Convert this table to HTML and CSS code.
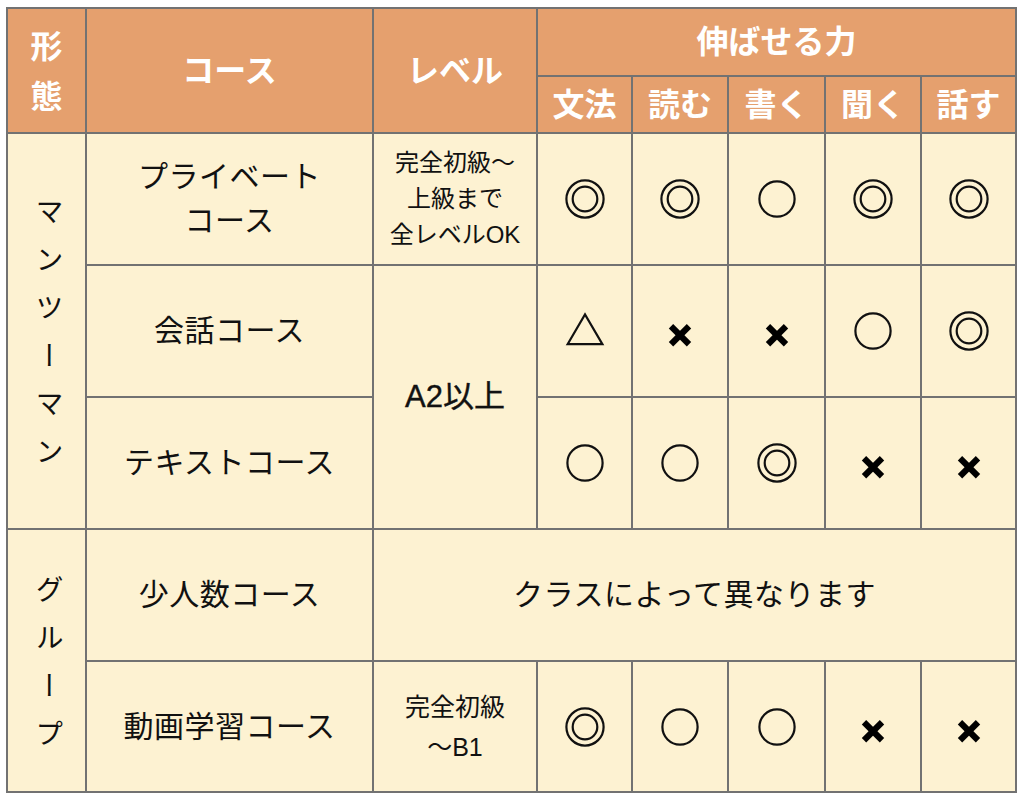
FILE: index.html
```html
<!DOCTYPE html>
<html lang="ja">
<head>
<meta charset="utf-8">
<title>コース比較</title>
<link rel="stylesheet" href="styles.css">
</head>
<body>
<svg class="defs" width="0" height="0" aria-hidden="true">
  <defs>
    <g id="dbl"><circle cx="20" cy="20" r="18.6" /><circle cx="20" cy="20" r="12.3" /></g>
    <g id="sgl"><circle cx="20" cy="20" r="17.6" /></g>
    <g id="tri"><polygon points="2.6,33.2 20,3.4 37.4,33.2" /></g>
    <g id="crs"><line x1="11" y1="15.2" x2="29" y2="33.2" /><line x1="29" y1="15.2" x2="11" y2="33.2" /></g>
  </defs>
</svg>
<div class="chart" role="table" aria-label="コース比較表">
  <div class="cell head span-r2 stacked">形<br>態</div>
  <div class="cell head span-r2">コース</div>
  <div class="cell head span-r2">レベル</div>
  <div class="cell head span-c5 big">伸ばせる力</div>
  <div class="cell head">文法</div>
  <div class="cell head">読む</div>
  <div class="cell head">書く</div>
  <div class="cell head">聞く</div>
  <div class="cell head">話す</div>

  <div class="cell side span-r3"><span class="vert">マンツーマン</span></div>
  <div class="cell name">プライベート<br>コース</div>
  <div class="cell level">完全初級〜<br>上級まで<br>全レベルOK</div>
  <div class="cell mark"><svg class="sym" viewBox="0 0 40 40" role="img" aria-label="◎"><use href="#dbl"/></svg></div>
  <div class="cell mark"><svg class="sym" viewBox="0 0 40 40" role="img" aria-label="◎"><use href="#dbl"/></svg></div>
  <div class="cell mark"><svg class="sym" viewBox="0 0 40 40" role="img" aria-label="○"><use href="#sgl"/></svg></div>
  <div class="cell mark"><svg class="sym" viewBox="0 0 40 40" role="img" aria-label="◎"><use href="#dbl"/></svg></div>
  <div class="cell mark"><svg class="sym" viewBox="0 0 40 40" role="img" aria-label="◎"><use href="#dbl"/></svg></div>

  <div class="cell name">会話コース</div>
  <div class="cell span-r2 a2">A2以上</div>
  <div class="cell mark"><svg class="sym" viewBox="0 0 40 40" role="img" aria-label="△"><use href="#tri"/></svg></div>
  <div class="cell mark"><svg class="sym x" viewBox="0 0 40 40" role="img" aria-label="×"><use href="#crs"/></svg></div>
  <div class="cell mark"><svg class="sym x" viewBox="0 0 40 40" role="img" aria-label="×"><use href="#crs"/></svg></div>
  <div class="cell mark"><svg class="sym" viewBox="0 0 40 40" role="img" aria-label="○"><use href="#sgl"/></svg></div>
  <div class="cell mark"><svg class="sym" viewBox="0 0 40 40" role="img" aria-label="◎"><use href="#dbl"/></svg></div>

  <div class="cell name">テキストコース</div>
  <div class="cell mark"><svg class="sym" viewBox="0 0 40 40" role="img" aria-label="○"><use href="#sgl"/></svg></div>
  <div class="cell mark"><svg class="sym" viewBox="0 0 40 40" role="img" aria-label="○"><use href="#sgl"/></svg></div>
  <div class="cell mark"><svg class="sym" viewBox="0 0 40 40" role="img" aria-label="◎"><use href="#dbl"/></svg></div>
  <div class="cell mark"><svg class="sym x" viewBox="0 0 40 40" role="img" aria-label="×"><use href="#crs"/></svg></div>
  <div class="cell mark"><svg class="sym x" viewBox="0 0 40 40" role="img" aria-label="×"><use href="#crs"/></svg></div>

  <div class="cell side span-r2"><span class="vert">グループ</span></div>
  <div class="cell name">少人数コース</div>
  <div class="cell span-c6 name">クラスによって異なります</div>

  <div class="cell name">動画学習コース</div>
  <div class="cell level lg">完全初級<br>〜B1</div>
  <div class="cell mark"><svg class="sym" viewBox="0 0 40 40" role="img" aria-label="◎"><use href="#dbl"/></svg></div>
  <div class="cell mark"><svg class="sym" viewBox="0 0 40 40" role="img" aria-label="○"><use href="#sgl"/></svg></div>
  <div class="cell mark"><svg class="sym" viewBox="0 0 40 40" role="img" aria-label="○"><use href="#sgl"/></svg></div>
  <div class="cell mark"><svg class="sym x" viewBox="0 0 40 40" role="img" aria-label="×"><use href="#crs"/></svg></div>
  <div class="cell mark"><svg class="sym x" viewBox="0 0 40 40" role="img" aria-label="×"><use href="#crs"/></svg></div>
</div>
</body>
</html>
```

FILE: styles.css
```css
html, body {
  margin: 0;
  padding: 0;
  background: #ffffff;
}

body {
  font-family: "Liberation Sans", "Noto Sans CJK JP", sans-serif;
  color: #111111;
}

.defs {
  position: absolute;
  width: 0;
  height: 0;
  overflow: hidden;
}

.chart {
  margin: 7px 0 0 6px;
  width: 1011px;
  box-sizing: border-box;
  padding: 2px;
  gap: 2px;
  background: #727272;
  display: grid;
  grid-template-columns: 77px 285px 162px 93px 94px 95px 94px 93px;
  grid-template-rows: 66px 55px 130px 130px 130px 130px 129px;
}

.cell {
  background: #fdf2d2;
  display: flex;
  align-items: center;
  justify-content: center;
  text-align: center;
  font-size: 30px;
  line-height: 44px;
}

.span-r2 { grid-row: span 2; }
.span-r3 { grid-row: span 3; }
.span-c5 { grid-column: span 5; }
.span-c6 { grid-column: span 6; }

.head {
  background: #e5a06e;
  color: #ffffff;
  font-weight: bold;
  font-size: 32px;
  line-height: 40px;
}

.head.stacked {
  line-height: 50px;
  padding-top: 2px;
}

.name {
  font-size: 30px;
  line-height: 44px;
  letter-spacing: 0.5px;
}

.level {
  font-size: 24px;
  line-height: 36px;
}

.level.lg {
  font-size: 25px;
  line-height: 40px;
}

.a2 {
  font-size: 31px;
  line-height: 40px;
  -webkit-text-stroke: 0.4px #111111;
}

.vert {
  writing-mode: vertical-rl;
  font-size: 28px;
  letter-spacing: 20px;
  line-height: 30px;
  margin-bottom: -20px;
}

.sym {
  width: 40px;
  height: 40px;
  fill: none;
  stroke: #111111;
  stroke-width: 2.2;
}

.sym.x {
  stroke-width: 6.2;
  stroke: #000000;
}
```
